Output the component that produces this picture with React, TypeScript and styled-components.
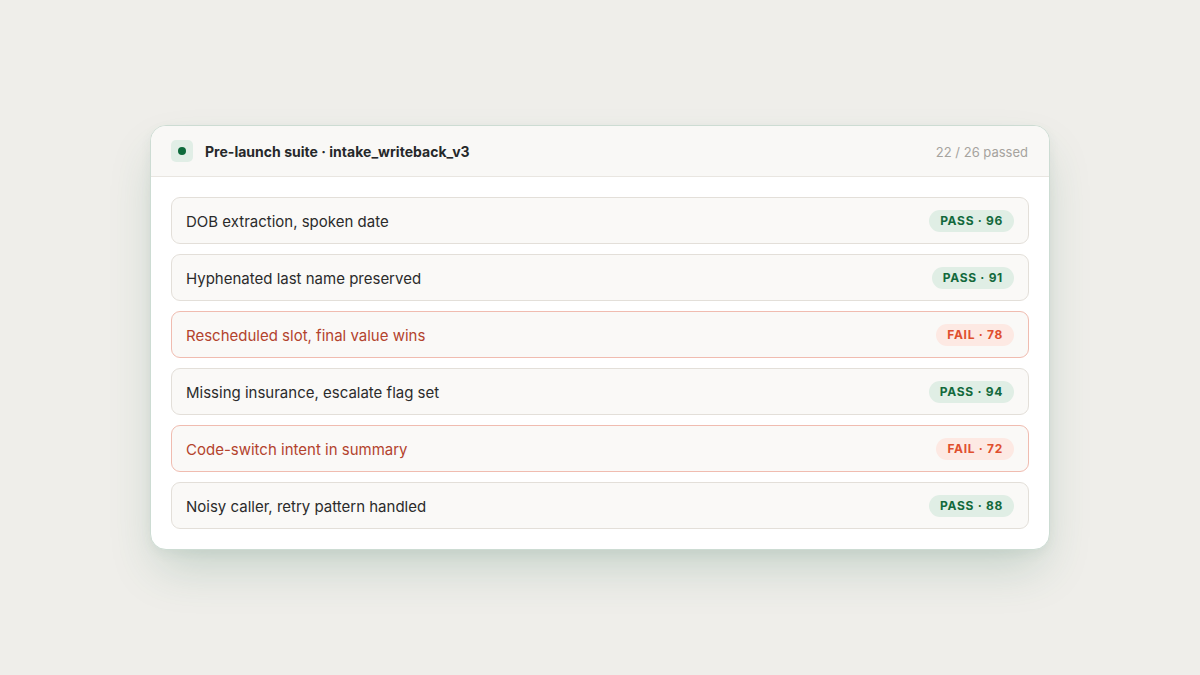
import React from "react";
import styled, { createGlobalStyle } from "styled-components";

const Global = createGlobalStyle`
  html, body { margin: 0; padding: 0; }
  body {
    background: #efeeea;
    font-family: Inter, "Noto Sans", sans-serif;
    -webkit-font-smoothing: antialiased;
  }
`;

const Page = styled.div`
  width: 1200px;
  height: 675px;
  display: flex;
  align-items: center;
  justify-content: center;
`;

const Card = styled.section`
  width: 900px;
  box-sizing: border-box;
  background: #ffffff;
  border: 1px solid #cddcd3;
  border-radius: 16px;
  overflow: hidden;
  box-shadow: 0 24px 48px -8px rgba(46, 110, 80, 0.22), 0 4px 12px rgba(46, 110, 80, 0.06);
`;

const Header = styled.header`
  display: flex;
  align-items: center;
  gap: 12px;
  padding: 14px 21px 14px 20px;
  background: #f9f8f6;
  border-bottom: 1px solid #e9e6e1;
`;

const DotBox = styled.span`
  width: 22px;
  height: 22px;
  border-radius: 5px;
  background: #e1eee6;
  display: flex;
  align-items: center;
  justify-content: center;
  &::after {
    content: "";
    width: 8px;
    height: 8px;
    border-radius: 50%;
    background: #0d6a3b;
  }
`;

const Title = styled.h1`
  margin: 0;
  flex: 1;
  font-size: 14px;
  font-weight: 700;
  letter-spacing: 0.02px;
  color: #26282a;
  padding-top: 1px;
`;

const Count = styled.span`
  font-size: 13px;
  color: #a6a39e;
  padding-top: 1px;
`;

const List = styled.div`
  display: flex;
  flex-direction: column;
  gap: 10px;
  padding: 20px;
`;

const Row = styled.div<{ $fail: boolean }>`
  display: flex;
  align-items: center;
  justify-content: space-between;
  height: 47px;
  box-sizing: border-box;
  padding: 0 14px;
  background: #faf9f7;
  border: 1px solid ${(p) => (p.$fail ? "#f0bcb0" : "#e3dfd9")};
  border-radius: 9px;
`;

const Label = styled.span<{ $fail: boolean }>`
  font-size: 15px;
  padding-top: 2px;
  color: ${(p) => (p.$fail ? "#b3432d" : "#2b2b2b")};
`;

const Badge = styled.span<{ $fail: boolean }>`
  height: 22px;
  display: inline-flex;
  align-items: center;
  padding: 0 11px;
  border-radius: 11px;
  font-size: 12px;
  font-weight: 700;
  letter-spacing: 0.7px;
  background: ${(p) => (p.$fail ? "#fde9e3" : "#e0eee5")};
  color: ${(p) => (p.$fail ? "#e04f2e" : "#13693c")};
`;

const tests = [
  { name: "DOB extraction, spoken date", pass: true, score: 96 },
  { name: "Hyphenated last name preserved", pass: true, score: 91 },
  { name: "Rescheduled slot, final value wins", pass: false, score: 78 },
  { name: "Missing insurance, escalate flag set", pass: true, score: 94 },
  { name: "Code-switch intent in summary", pass: false, score: 72 },
  { name: "Noisy caller, retry pattern handled", pass: true, score: 88 },
];

export default function App() {
  return (
    <>
      <Global />
      <Page>
        <Card>
          <Header>
            <DotBox />
            <Title>Pre-launch suite · intake_writeback_v3</Title>
            <Count>22 / 26 passed</Count>
          </Header>
          <List>
            {tests.map((t) => (
              <Row key={t.name} $fail={!t.pass}>
                <Label $fail={!t.pass}>{t.name}</Label>
                <Badge $fail={!t.pass}>
                  {t.pass ? "PASS" : "FAIL"} · {t.score}
                </Badge>
              </Row>
            ))}
          </List>
        </Card>
      </Page>
    </>
  );
}
